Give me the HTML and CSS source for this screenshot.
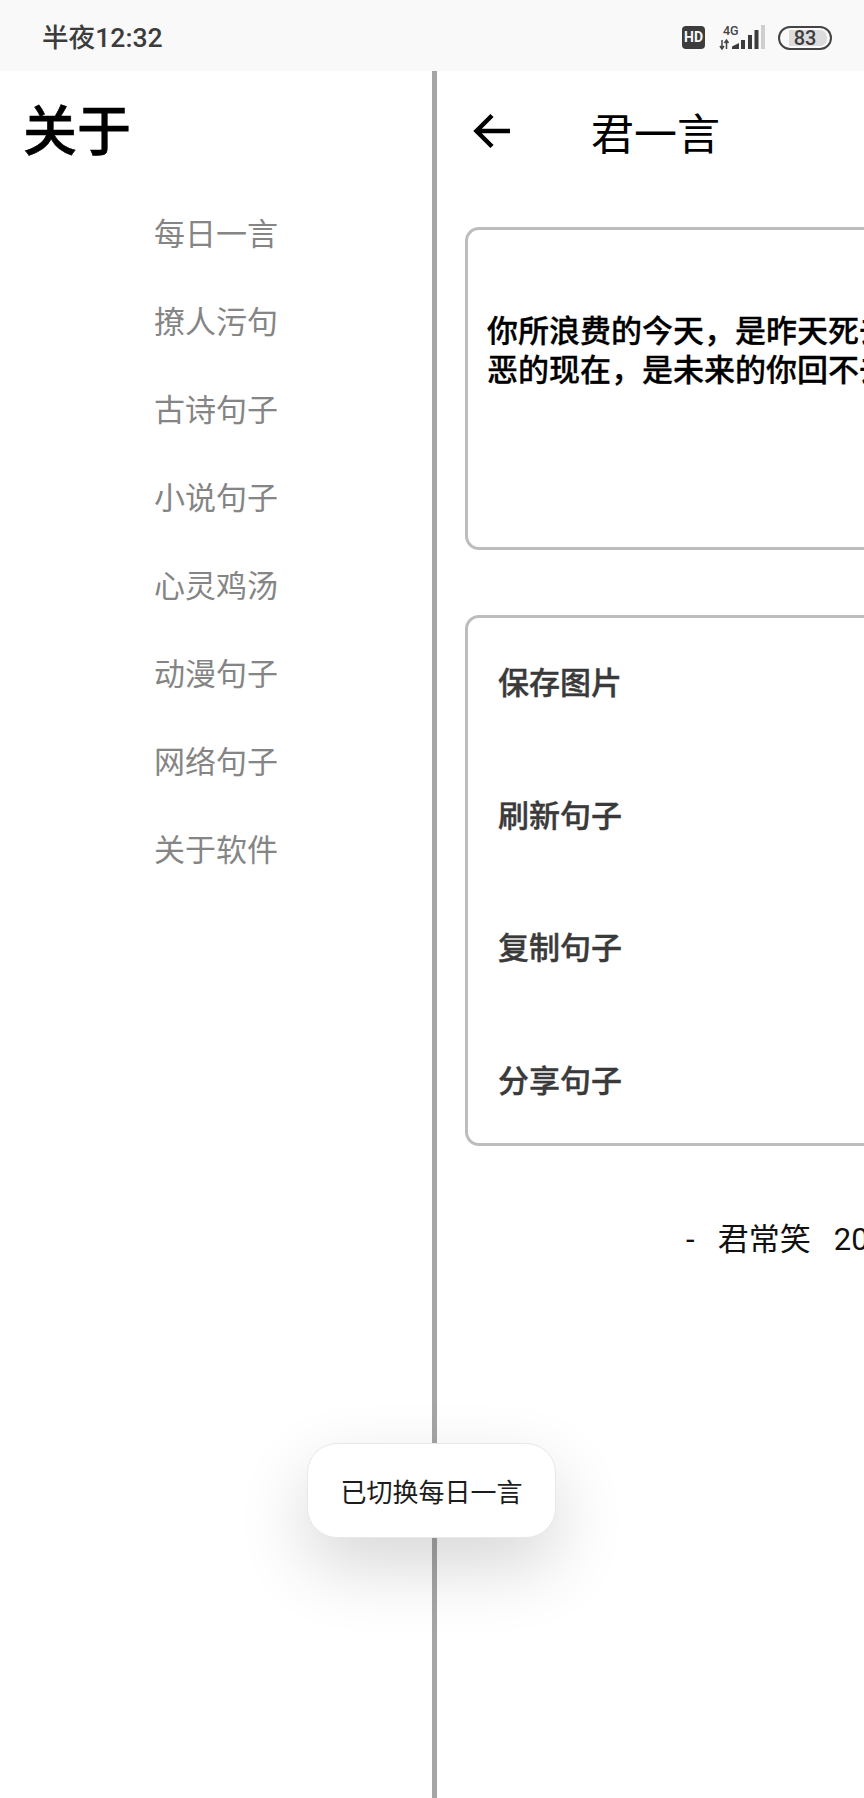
FILE: index.html
```html
<!DOCTYPE html>
<html lang="zh-CN">
<head>
<meta charset="utf-8">
<title>君一言</title>
<link rel="stylesheet" href="styles.css">
</head>
<body>
<div class="screen">
  <header class="status">
    <span class="clock">半夜12:32</span>
    <div class="status-icons">
      <span class="hd">HD</span>
      <svg class="signal" width="46" height="25" viewBox="0 0 46 25">
        <text x="4" y="9.500" class="net">4G</text>
        <path d="M3 15v9M1 21l2 3 2-3M7.500 24v-9M5.500 18l2-3 2 3" fill="none" stroke="#444" stroke-width="1.500"/>
        <path d="M13 24v-2.500l7-3.500v6z" fill="#3c3c3c"/>
        <rect x="22" y="15" width="4" height="9" fill="#3c3c3c"/>
        <rect x="29" y="10" width="4" height="14" fill="#3c3c3c"/>
        <rect x="35.500" y="5" width="4" height="19" fill="#3c3c3c"/>
        <rect x="42" y="0" width="4" height="24" fill="#cfcfcf"/>
      </svg>
      <span class="battery"><span class="battery-fill"></span><span class="battery-num">83</span></span>
    </div>
  </header>
  <div class="panes">
    <aside class="drawer">
      <h1 class="drawer-title">关于</h1>
      <nav class="menu">
        <a class="menu-item">每日一言</a>
        <a class="menu-item">撩人污句</a>
        <a class="menu-item">古诗句子</a>
        <a class="menu-item">小说句子</a>
        <a class="menu-item">心灵鸡汤</a>
        <a class="menu-item">动漫句子</a>
        <a class="menu-item">网络句子</a>
        <a class="menu-item">关于软件</a>
      </nav>
    </aside>
    <main class="main">
      <div class="appbar">
        <svg class="back" width="38" height="36" viewBox="0 0 38 36"><path d="M37 18H4M19 2.500L3.500 18 19 33.500" fill="none" stroke="#000" stroke-width="4.500"/></svg>
        <span class="app-title">君一言</span>
      </div>
      <section class="card quote-card">
        <p class="quote">你所浪费的今天，是昨天死去的人奢望的明天；你所厌恶的现在，是未来的你回不去的曾经。</p>
      </section>
      <section class="card actions">
        <div class="action">保存图片</div>
        <div class="action">刷新句子</div>
        <div class="action">复制句子</div>
        <div class="action">分享句子</div>
      </section>
      <p class="credit">-&nbsp;&nbsp;&nbsp;君常笑&nbsp;&nbsp;&nbsp;2019-12-30</p>
    </main>
  </div>
  <div class="toast">已切换每日一言</div>
</div>
</body>
</html>
```
FILE: styles.css
```css
* { box-sizing: border-box; }
html, body { margin: 0; padding: 0; background: #fff; }
.screen {
  position: relative;
  width: 864px;
  height: 1798px;
  overflow: hidden;
  font-family: "Noto Sans CJK SC", "Noto Sans", sans-serif;
  display: flex;
  flex-direction: column;
}
.status {
  flex: none;
  height: 71px;
  background: #f9f9f9;
  display: flex;
  align-items: center;
  justify-content: space-between;
  padding: 4px 32px 0 42px;
}
.clock { margin-top: 2px; font-size: 26.600px; font-weight: 500; color: #3c3c3c; line-height: 1; font-family: "Roboto", "Noto Sans CJK SC", sans-serif; }
.status-icons { display: flex; align-items: center; }
.hd {
  width: 23px; height: 23px;
  background: #3c3c3c; color: #f9f9f9;
  border-radius: 4px;
  font: 700 14px/23px "Roboto", sans-serif;
  text-align: center;
}
.signal { margin-left: 14px; display: block; }
.net { font: 500 12.500px "Roboto", sans-serif; fill: #444; }
.battery {
  position: relative;
  margin-left: 13px;
  width: 54px; height: 24px;
  border: 2.500px solid #444;
  border-radius: 12px;
  display: flex; align-items: center; justify-content: center;
}
.battery-fill { position: absolute; left: 9px; top: 2px; bottom: 2px; right: 3px; background: #dcdcdc; border-radius: 0 7px 7px 0; }
.battery-num { position: relative; font: 500 20px/1 "Roboto", sans-serif; color: #3c3c3c; }
.panes { flex: 1; display: flex; min-height: 0; }
.drawer { flex: none; width: 432px; background: #fff; }
.drawer-title {
  margin: 24px 0 0 23px;
  font-size: 54px; line-height: 66px; font-weight: 500; color: #000;
  -webkit-text-stroke: 0.6px #000;
}
.menu { display: flex; flex-direction: column; margin-top: 27px; padding-left: 154px; }
.menu-item { height: 88px; font-size: 31px; line-height: 88px; color: #858585; }
.main { flex: none; width: 864px; border-left: 5px solid #a5a5a5; padding: 0 28px; }
.appbar { display: flex; align-items: center; height: 96px; margin-top: 12px; }
.back { margin-left: 8px; flex: none; }
.app-title { margin-left: 80px; font-size: 43px; line-height: 1; color: #000; }
.card { border: 3px solid #bdbdbd; border-radius: 14px; }
.quote-card {
  margin-top: 48px;
  height: 323px;
  padding: 79px 19px 0;
}
.quote { margin: 0; font-size: 31px; line-height: 39px; font-weight: 500; color: #000; -webkit-text-stroke: 0.3px #000; }
.actions {
  margin-top: 65px;
  height: 531px;
  padding: 0 0 0 30px;
  display: flex; flex-direction: column;
}
.action { flex: none; height: 132.600px; font-size: 31px; line-height: 126px; font-weight: 500; color: #3a3a3a; -webkit-text-stroke: 0.4px #3a3a3a; }
.credit { margin: 69px 0 0; padding-left: 221px; white-space: nowrap; font-size: 31px; line-height: 50px; color: #111; font-family: "Roboto", "Noto Sans CJK SC", sans-serif; }
.toast {
  position: absolute;
  left: 307px; top: 1443px;
  width: 249px; height: 95px;
  background: #fff;
  border: 1px solid #e8e8e8;
  border-radius: 30px;
  display: flex; align-items: center; justify-content: center;
  font-size: 26px; color: #1c1c1c;
  box-shadow: 0 28px 70px rgba(0,0,0,.16);
}
```
